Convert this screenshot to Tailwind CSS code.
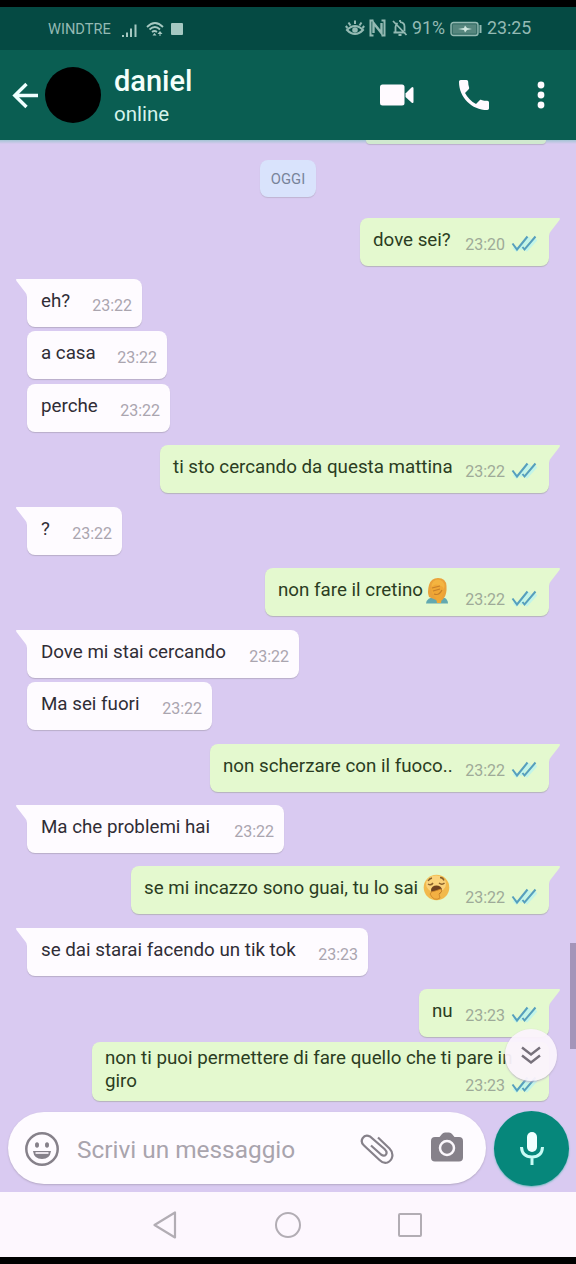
<!DOCTYPE html>
<html lang="it">
<head>
<meta charset="utf-8">
<title>daniel</title>
<script src="https://cdn.jsdelivr.net/npm/@tailwindcss/browser@4"></script>
</head>
<body class="w-[576px] h-[1264px] overflow-hidden bg-black font-[Roboto,sans-serif] flex flex-col">
<svg class="hidden">
  <symbol id="ticks" viewBox="0 0 26 18">
    <path d="M3 13 7 16.500M14.500 16.500 25 5M9 15 19 4" fill="none" stroke="#b4f3f4" stroke-width="4" opacity=".7"/>
    <path d="M1.500 9.500 6 15.500 16.500 2.500M11.500 13 13.500 15.500 24.500 2.500" fill="none" stroke="#569fbd" stroke-width="2"/>
  </symbol>
  <symbol id="tail-out" viewBox="0 0 12 18"><path d="M0 0H10.500Q11.500 .5 10.500 2L2 13Q0 15 0 18Z" fill="#e4f9cf"/></symbol>
  <symbol id="tail-in" viewBox="0 0 12 18"><path d="M12 0H1.500Q.5 .5 1.500 2L10 13Q12 15 12 18Z" fill="#fefbff"/></symbol>
</svg>

<div class="mt-[7px] h-[43px] shrink-0 bg-[#054a43] flex items-center text-[#94bab3] pl-12 pt-0.5">
  <span class="text-[14.6px] w-[73px] whitespace-nowrap">WINDTRE</span>
  <svg class="w-[17px] h-5" viewBox="0 0 17 20"><path d="M2 15v2M6 12.500V17M10 8.500V17M14.500 4.500V17" stroke="#a6c8c1" stroke-width="2" fill="none"/></svg>
  <svg class="w-[18px] h-5 ml-2 -mt-0.5" viewBox="0 0 18 20"><path d="M1 8Q9 0 17 8M3.500 10.500Q9 5.500 14 10.500M6 13Q8.500 11 11 13" stroke="#a6c8c1" stroke-width="1.800" fill="none"/><path d="M8.500 14 6.500 16.500h4zM14 12l-2.500 3h2v2h1v-2h2z" fill="#a6c8c1"/></svg>
  <span class="ml-[7px] -mt-0.5 size-3 bg-[#a5c8c2] rounded-[1px]"></span>
  <svg class="w-5 h-5 ml-[162px] -mt-1" viewBox="0 0 20 20"><path d="M2 12Q10 4 18 12 10 20 2 12ZM10 6V2.500M5.500 7.500 3.500 4.500M14.500 7.500l2-3M2.500 10 .8 8M17.500 10l1.700-2" stroke="#94bab3" stroke-width="2" fill="none"/><circle cx="10" cy="12" r="2.800" fill="#94bab3"/></svg>
  <svg class="w-[17px] h-[18px] ml-1 -mt-1" viewBox="0 0 17 18"><path d="M4.500 16.500H1.500V1.500H4.500M12.500 1.500H15.500V16.500H12.500" stroke="#94bab3" stroke-width="2" fill="none"/><path d="M4.500 14V4l8 10V4" stroke="#94bab3" stroke-width="2.400" fill="none"/></svg>
  <svg class="w-4 h-[18px] ml-[6px] -mt-1" viewBox="0 0 16 18"><path d="M1.500 13.500H13.500M12.500 12V7.500Q12.500 3.500 8 3.200M5.500 4Q3.500 5.500 3.500 8v5M1 2l13.500 14M8 1v2M6.500 16h3" stroke="#94bab3" stroke-width="1.800" fill="none"/></svg>
  <span class="text-[17.8px] w-[34px] ml-1 -mt-0.5 whitespace-nowrap">91%</span>
  <svg class="w-8 h-4 ml-1 -mt-0.5" viewBox="0 0 32 16"><rect x="1" y="1.500" width="27" height="13" rx="2.500" fill="#376e67" stroke="#94bab3" stroke-width="1.400"/><rect x="3" y="3.500" width="23" height="9" fill="#56867e"/><path d="M8 8l6-1 1-2.500L17 7l5 1-5 1-2 2.500L14 9z" fill="#d0e6df"/><path d="M30.500 4v8" stroke="#94bab3" stroke-width="2"/></svg>
  <span class="text-[17.800px] text-[17.8px] ml-[5px] -mt-0.5">23:25</span>
</div>

<header class="h-[90px] shrink-0 bg-[#0a5e52] flex items-center pl-3 text-[#f4fffb]">
  <svg class="w-[27px] h-[27px]" viewBox="0 0 27 27"><path d="M26 13.500H3M14.500 2 2.800 13.500 14.500 25" stroke="#efffff" stroke-width="3.400" fill="none"/></svg>
  <span class="size-14 rounded-full bg-black ml-[6px]"></span>
  <div class="ml-[13px] w-[266px] flex flex-col pt-px">
    <h1 class="text-[29px] leading-8 font-medium">daniel</h1>
    <p class="text-[20.5px] leading-6 mt-[5px] text-[#d5f3ec]">online</p>
  </div>
  <svg class="w-[34px] h-6" viewBox="0 0 34 24"><rect x="0" y="1.500" width="24.500" height="21" rx="2.500" fill="#fffaff"/><path d="M25.500 10.500 31.500 4.500Q33.500 3 33.500 5.500V18.500Q33.500 21 31.500 19.500L25.500 14Z" fill="#fffaff"/></svg>
  <svg class="w-[30px] h-[30px] ml-[45px]" viewBox="3 3 18 18"><path d="M6.620 10.790c1.440 2.830 3.760 5.140 6.590 6.590l2.200-2.200c.27-.27.67-.36 1.020-.24 1.120.37 2.330.57 3.570.57.550 0 1 .45 1 1V20c0 .550-.45 1-1 1-9.390 0-17-7.610-17-17 0-.55.450-1 1-1h3.500c.55 0 1 .45 1 1 0 1.250.2 2.450.57 3.570.110.350.030.740-.250 1.020l-2.200 2.200z" fill="#fffaff"/></svg>
  <svg class="w-2 h-7 ml-12" viewBox="0 0 8 28"><g fill="#fffaff"><circle cx="4" cy="4" r="3.400"/><circle cx="4" cy="14" r="3.400"/><circle cx="4" cy="24" r="3.400"/></g></svg>
</header>

<main class="h-[972px] shrink-0 bg-[#d9caf1] relative flex flex-col text-[18.75px] leading-[23px] text-[#302d36]">
  <div class="h-1 bg-linear-to-b from-[#a3c4d4] to-[#d9caf1] pl-[366px]"><div class="w-[180px] h-1 rounded-b-lg bg-[#d0e9cf] shadow-[0_1px_1px_#bbaecb]"></div></div>
  <div class="self-center mt-4 w-14 h-[37px] rounded-lg bg-[#d9e3fc] text-[#78839a] text-[14.8px] flex items-center justify-center shadow-[0_1px_1px_#bfb4d2] pt-0.5">OGGI</div>
  <div id="messages" class="flex flex-col mt-[21px]"></div>

  <div class="absolute right-0 top-[803px] w-1.5 h-[106px] bg-[#a495b9]"></div>
  <button class="absolute left-[505px] top-[889px] size-[52px] rounded-full bg-[#fbf3fc]/95 flex items-center justify-center shadow-[0_1px_2px_#b9b0c6]">
    <svg class="w-5 h-[18px]" viewBox="0 0 20 18"><path d="M1 1.500 10 8.500 19 1.500M1 9.500l9 7 9-7" stroke="#77717b" stroke-width="2.400" fill="none"/></svg>
  </button>
</main>

<div class="h-20 shrink-0 bg-[#d9caf1] flex items-start pl-2 relative">
  <div class="w-[478px] h-[72px] rounded-full bg-[#fefbff] shadow-[0_1px_2px_#b4a8c5] flex items-center pl-[17px]">
    <svg class="w-[34px] h-[34px] mt-px" viewBox="0 0 34 34"><circle cx="17" cy="17" r="15.700" fill="none" stroke="#86818a" stroke-width="2.500"/><ellipse cx="12" cy="13" rx="2" ry="2.800" fill="#86818a"/><ellipse cx="22" cy="13" rx="2" ry="2.800" fill="#86818a"/><path d="M8 19H26Q25 27 17 27T8 19Z" fill="#86818a"/><path d="M10.500 21h13" stroke="#f4eff5" stroke-width="1.800"/></svg>
    <span class="ml-[18px] pt-1 w-[283px] text-[24.4px] text-[#a9a4ad] whitespace-nowrap">Scrivi un messaggio</span>
    <svg class="w-[34px] h-[31px] mt-0.5" viewBox="0 0 34 31"><path d="M18 3.500 29.500 14.500C34.500 19.500 32.500 26.500 27.500 28.500 24.500 29.500 22 28.500 19.500 26L4 11.500C-1 7 3.500 -.5 10 2.500L24.500 15C29 19.500 25 23.500 21 20.500L11 11.500" fill="none" stroke="#86818a" stroke-width="2.200"/></svg>
    <svg class="w-8 h-[30px] ml-[37px] -mt-0.5" viewBox="0 0 32 30"><path d="M4 5H8.500L11 2Q12 .5 14 .5H18Q20 .5 21 2L23.500 5H28Q32 5 32 9V25.500Q32 29.500 28 29.500H4Q0 29.500 0 25.500V9Q0 5 4 5Z" fill="#86818a"/><circle cx="16" cy="16" r="7" fill="none" stroke="#fbf7fc" stroke-width="2.500"/></svg>
  </div>
  <button class="ml-2 -mt-px size-[75px] rounded-full bg-[#06877b] shadow-[0_1px_2px_#6db8bd] flex items-center justify-center">
    <svg class="w-6 h-[34px]" viewBox="0 0 24 34"><rect x="7" y="0" width="10" height="20" rx="5" fill="#f0ffff"/><path d="M1.500 15Q2 25 12 25T22.500 15M12 25v8" fill="none" stroke="#c8fbf5" stroke-width="3"/></svg>
  </button>
</div>

<nav class="h-[65px] shrink-0 bg-[#fdf7fe] flex items-center pl-[153px]">
  <svg class="w-6 h-7" viewBox="0 0 24 28"><path d="M22 1.500V26.500L1.500 14Z" fill="none" stroke="#b2adb4" stroke-width="2.200" stroke-linejoin="round"/></svg>
  <span class="ml-[98px] size-[26px] rounded-full border-2 border-[#b2adb4]"></span>
  <span class="ml-[97px] size-6 rounded-[2px] border-2 border-[#b2adb4]"></span>
</nav>

<template id="facepalm"><svg class="w-[23px] h-[27px] ml-[3px] mt-[9px] shrink-0" viewBox="0 0 23 27"><path d="M0 26.500Q1 20 9 20L19 21Q22 23 22 26.500Z" fill="#62a9b0"/><path d="M3 20Q1 15 3 8 5 1 12 1 20 1 20.500 9 21 17 18 21 15 26 10 23Z" fill="#eaa23a"/><ellipse cx="12" cy="9" rx="6.500" ry="6.500" fill="#f4b440"/><path d="M5 11Q8 6 13 8L17 10Q19 15 16 19L15 26H11L10 21Q5 17 5 11Z" fill="#f0a735"/><path d="M6 11l8-2M7 14l7-2M8 17q5 2 8-4" stroke="#c67f2a" stroke-width="1.200" fill="none"/></svg></template>
<template id="yawn"><svg class="w-[27px] h-[27px] ml-[5px] mt-[8px] shrink-0" viewBox="0 0 27 27"><circle cx="13.500" cy="13.500" r="12.800" fill="#f2b94b"/><ellipse cx="13" cy="10" rx="10" ry="8.500" fill="#fad27a"/><path d="M5 7q1.500-2.500 4-3M17 3.500q3 0 4 3M5 10q3 2 5-1M16 9q3 2.500 5.500 0" stroke="#89602b" stroke-width="1.400" fill="none"/><ellipse cx="13.500" cy="16" rx="5.500" ry="4.500" fill="#70421f"/><path d="M7 20Q8 17 12 17L18 15 19 17 16 20 17 24Q11 28 7 20Z" fill="#f3b043" stroke="#c98228" stroke-width=".8"/></svg></template>

<script>
// side, tail, top gap, left edge, width, text, time, extra
const rows = [
  ['out', 1, 0, 360, 189, 'dove sei?', '23:20'],
  ['in', 1, 13, 27, 115, 'eh?', '23:22'],
  ['in', 0, 4, 27, 140, 'a casa', '23:22'],
  ['in', 0, 5, 27, 143, 'perche', '23:22'],
  ['out', 1, 13, 160, 389, 'ti sto cercando da questa mattina', '23:22'],
  ['in', 1, 14, 27, 95, '?', '23:22'],
  ['out', 1, 13, 265, 284, 'non fare il cretino', '23:22', 'facepalm'],
  ['in', 1, 14, 27, 272, 'Dove mi stai cercando', '23:22'],
  ['in', 0, 4, 27, 185, 'Ma sei fuori', '23:22'],
  ['out', 1, 14, 210, 339, 'non scherzare con il fuoco..', '23:22'],
  ['in', 1, 13, 27, 257, 'Ma che problemi hai', '23:22'],
  ['out', 1, 13, 131, 418, 'se mi incazzo sono guai, tu lo sai', '23:22', 'yawn'],
  ['in', 1, 14, 27, 341, 'se dai starai facendo un tik tok', '23:23'],
  ['out', 1, 13, 419, 130, 'nu', '23:23'],
  ['out', 0, 5, 92, 457, 'non ti puoi permettere di fare quello che ti pare in<br>giro', '23:23', 'two'],
];
const list = document.getElementById('messages');
for (const [side, tail, gap, left, width, text, time, extra] of rows) {
  const out = side === 'out', two = extra === 'two', emoji = extra && !two;
  const row = document.createElement('div');
  row.className = (two ? 'h-[59px]' : 'h-12') + ' relative flex rounded-lg whitespace-nowrap ' +
    (out ? 'bg-[#e4f9cf] text-[#2b3d22] shadow-[0_1px_1px_#b5b2bd] pl-[13px] pr-3' : 'bg-[#fefbff] shadow-[0_1px_1px_#b8adc9] pl-[14px] pr-[10px]') +
    (tail ? (out ? ' rounded-tr-none' : ' rounded-tl-none') : '');
  row.style.cssText = `margin-top:${gap}px;margin-left:${left}px;width:${width}px`;
  row.innerHTML =
    (tail ? `<svg class="absolute top-0 w-3 h-[18px] ${out ? 'left-full' : 'right-full'}"><use href="#tail-${side}"/></svg>` : '') +
    `<span class="${two ? 'pt-[5px] w-0' : 'pt-[11px]'}">${text}</span>` +
    (emoji ? document.getElementById(extra).innerHTML : '') +
    `<span class="ml-auto flex items-start ${two ? 'pt-[32px]' : emoji ? 'pt-[20px]' : 'pt-[15px]'}">` +
    `<span class="text-[16px] ${out ? 'text-[#9eaa98]' : 'text-[#aaa5af]'}">${time}</span>` +
    (out ? '<svg class="w-[26px] h-[18px] ml-[6px] mt-px"><use href="#ticks"/></svg>' : '') + '</span>';
  list.append(row);
}
</script>
</body>
</html>
